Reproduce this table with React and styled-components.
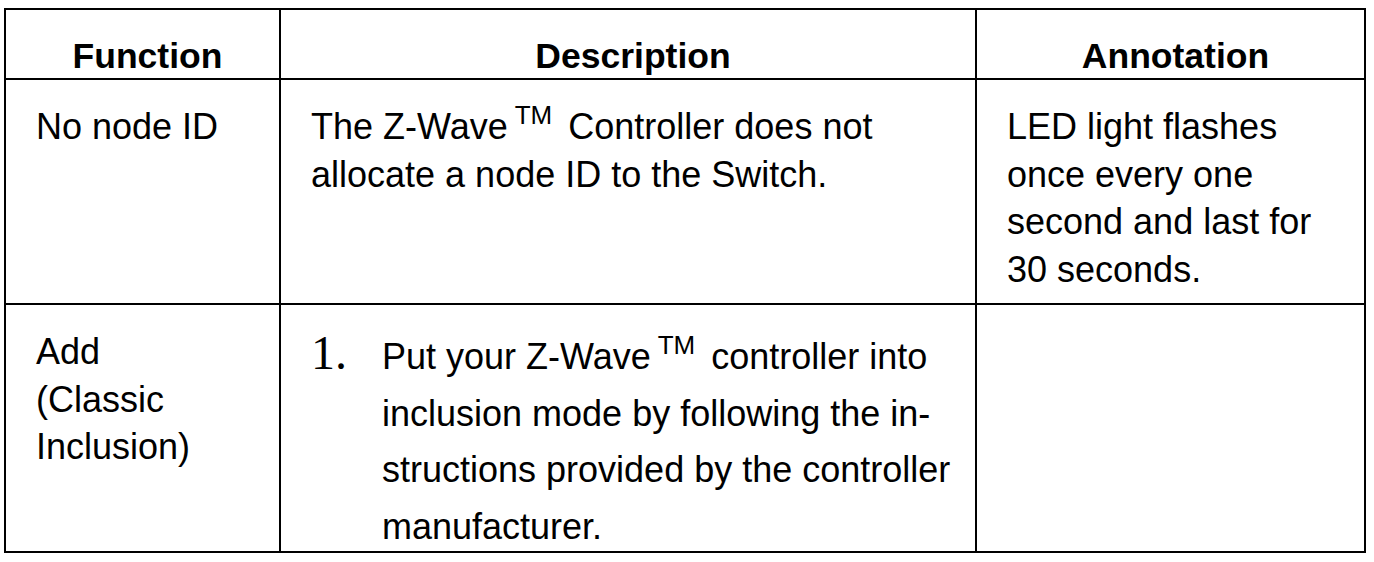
import React from 'react';
import styled, { createGlobalStyle } from 'styled-components';

const GlobalStyle = createGlobalStyle`
  html, body {
    margin: 0;
    padding: 0;
    background: #fff;
  }
  body {
    font-family: "Liberation Sans", Arial, sans-serif;
    color: #000;
  }
`;

const Page = styled.div`
  padding: 8px 0 0 4px;
`;

// grid lines: outer top/left on the grid, right/bottom on each cell
const Grid = styled.div`
  display: grid;
  grid-template-columns: 275px 696px 389px;
  grid-template-rows: 70px 225px 248px;
  width: fit-content;
  border-top: 2px solid #000;
  border-left: 2px solid #000;
`;

const Cell = styled.div`
  box-sizing: border-box;
  border-right: 2px solid #000;
  border-bottom: 2px solid #000;
  padding: ${({ $pt }) => $pt ?? 23}px 12px 0 30px;
  font-size: 36px;
  line-height: ${({ $lh }) => $lh ?? 47.5}px;
  white-space: nowrap;
`;

const HeadCell = styled(Cell)`
  padding: 26px 0 0 10px;
  text-align: center;
  font-size: 35.5px;
  font-weight: bold;
  line-height: 40px;
`;

const Tm = styled.span`
  font-size: 26px;
  vertical-align: 15px;
  line-height: 0;
  margin: 0 6px 0 7px;
`;

const Step = styled.div`
  display: flex;
  align-items: baseline;
`;

const StepNumber = styled.span`
  font-family: "Liberation Serif", "Times New Roman", serif;
  font-size: 48px;
  width: 71px;
  flex: none;
`;

const StepText = styled.div`
  line-height: 56.5px;
`;

export default function App() {
  return (
    <Page>
      <GlobalStyle />
      <Grid>
        <HeadCell>Function</HeadCell>
        <HeadCell>Description</HeadCell>
        <HeadCell>Annotation</HeadCell>

        <Cell>No node ID</Cell>
        <Cell $lh={48}>
          The Z-Wave<Tm>TM</Tm> Controller does not
          <br />
          allocate a node ID to the Switch.
        </Cell>
        <Cell $lh={47.7}>
          LED light flashes
          <br />
          once every one
          <br />
          second and last for
          <br />
          30 seconds.
        </Cell>

        <Cell>
          Add
          <br />
          (Classic
          <br />
          Inclusion)
        </Cell>
        <Cell $pt={24}>
          <Step>
            <StepNumber>1.</StepNumber>
            <StepText>
              Put your Z-Wave<Tm>TM</Tm> controller into
              <br />
              inclusion mode by following the in-
              <br />
              structions provided by the controller
              <br />
              manufacturer.
            </StepText>
          </Step>
        </Cell>
        <Cell />
      </Grid>
    </Page>
  );
}
